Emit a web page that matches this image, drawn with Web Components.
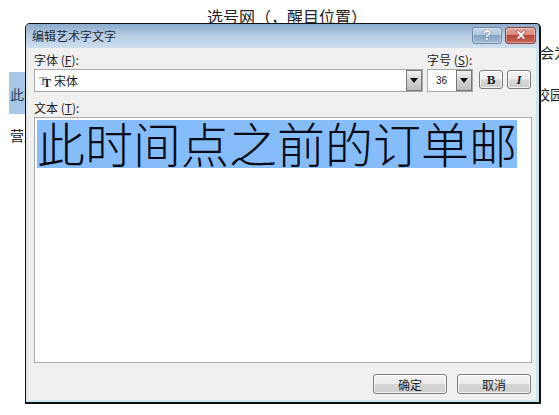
<!DOCTYPE html>
<html>
<head>
<meta charset="utf-8">
<style>
  html, body { margin: 0; background: #fff; }
  body { width: 559px; height: 415px; overflow: hidden; font-family: "Noto Sans CJK SC", sans-serif; }
</style>
</head>
<body>
<doc-page></doc-page>
<art-dialog></art-dialog>

<script>
class DocPage extends HTMLElement {
  constructor() {
    super();
    this.attachShadow({ mode: "open" });
    this.shadowRoot.innerHTML = `
      <style>
        :host { display: block; width: 559px; height: 415px; overflow: hidden; position: relative; color: #222; font-size: 14px; line-height: 20px; }
        .head { text-align: center; padding: 6px 0 0 15px; font-size: 16px; }
        .head span { display: inline-block; width: 16px; }
        .row { position: absolute; white-space: nowrap; }
        .hl { position: absolute; left: 9px; top: 72px; width: 17px; height: 42px; background: #a9c8e8; }
      </style>
      <div class="head">选号网<span>（</span><span>，</span>醒目位置<span>）</span></div>
      <div class="hl"></div>
      <div class="row" style="left:10px;top:84px;color:#1f3f63">此时</div>
      <div class="row" style="left:10px;top:125px">营业</div>
      <div class="row" style="left:540px;top:42px">会为</div>
      <div class="row" style="left:536px;top:84px">校园</div>
    `;
  }
}

class CaptionButton extends HTMLElement {
  constructor() {
    super();
    this.attachShadow({ mode: "open" });
  }
  connectedCallback() {
    const close = this.hasAttribute("close");
    this.shadowRoot.innerHTML = `
      <style>
        :host { display: flex; align-items: center; justify-content: center; height: 17px; box-sizing: border-box; width: ${close ? 31 : 30}px; border: 1px solid ${close ? "#8d4a45" : "#6f8ba8"}; border-radius: 3px;
          background: ${close ? "linear-gradient(#e2a79c 0,#d98a7c 45%,#b8453a 50%,#c9675a 100%)" : "linear-gradient(#c3d6e8 0,#afc6dc 45%,#86a5c4 50%,#a1bcd6 100%)"};
          box-shadow: inset 0 0 0 1px rgba(255,255,255,.35); }
        svg { display: block; }
        span { font: bold 14px "Liberation Sans", sans-serif; color: #f4f7fa; text-shadow: 0 0 1px #334; line-height: 15px; }
      </style>
      ${close
        ? `<svg width="14" height="10" viewBox="0 0 14 10"><path d="M2 1h3l2 2.2L9 1h3L8.6 5 12 9H9L7 6.8 5 9H2l3.4-4z" fill="#fff" stroke="#7a3a34" stroke-width=".5"/></svg>`
        : `<span>?</span>`}
    `;
  }
}

class ComboBox extends HTMLElement {
  constructor() {
    super();
    this.attachShadow({ mode: "open" });
    this.shadowRoot.innerHTML = `
      <style>
        :host { display: flex; box-sizing: border-box; height: 23px; border: 1px solid #a9a9a9; background: #fff; align-items: stretch; font-size: 12px; color: #222; }
        .val { flex: 1; min-width: 0; display: flex; align-items: center; line-height: 21px; }
        .arrow { width: 16px; flex: none; box-sizing: border-box; border: 1px solid #777; background: linear-gradient(#f2f2f2, #d4d4d4 50%, #bdbdbd); display: flex; align-items: center; justify-content: center; }
        .arrow i { width: 0; height: 0; border: 4px solid transparent; border-top: 5px solid #111; border-bottom: 0; }
      </style>
      <div class="val"><slot></slot></div>
      <div class="arrow"><i></i></div>
    `;
  }
}

class PushButton extends HTMLElement {
  constructor() {
    super();
    this.attachShadow({ mode: "open" });
    this.shadowRoot.innerHTML = `
      <style>
        :host { display: flex; box-sizing: border-box; align-items: center; justify-content: center; border: 1px solid #7b7b7b; border-radius: 3px;
          background: linear-gradient(#f4f4f4 0, #ececec 48%, #d6d6d6 52%, #cfcfcf 100%); box-shadow: inset 0 0 0 1px rgba(255,255,255,.7); color: #222; font-size: 12px; }
      </style>
      <slot></slot>
    `;
  }
}

class ArtDialog extends HTMLElement {
  constructor() {
    super();
    this.attachShadow({ mode: "open" });
    this.shadowRoot.innerHTML = `
      <style>
        :host { position: absolute; left: 25px; top: 23px; width: 516px; height: 381px; box-sizing: border-box; display: flex; flex-direction: column;
          border: 1px solid #111; border-right-width: 2px; border-bottom-width: 2px; border-radius: 5px 5px 0 0; overflow: hidden; background: #cde5ee; color: #222; font-size: 12px; }
        .title { height: 24px; flex: none; display: flex; align-items: center; justify-content: space-between; padding: 0 3px 2px 6px; box-sizing: border-box;
          background: linear-gradient(#8caac8, #b4cbe2 45%, #cfdfee); font-size: 12px; color: #1c2a38; }
        .caps { display: flex; gap: 3px; }
        .body { flex: 1; display: flex; flex-direction: column; margin: 0 3px 2px 0; padding-left: 6px; background: #f0f0f0; border-left: 2px solid #e2e6e8; box-sizing: border-box; }
        .top { display: grid; grid-template-columns: 389px 46px 26px 24px; column-gap: 4px; padding-top: 3px; }
        .lab { height: 18px; line-height: 18px; font-size: 12px; white-space: nowrap; }
        .lab u { text-decoration: underline; }
        .size-lab { grid-column: 2 / 5; }
        .tt { display: inline-flex; width: 15px; margin: 2px 0 0 4px; font: bold 12px/12px "Liberation Serif", serif; }
        .tt b { color: #999; }
        .tt b + b { color: #222; margin-left: -4px; margin-top: 2px; }
        .size { font: 10px "Liberation Sans", sans-serif; padding-left: 8px; }
        .fmt { width: 24px; height: 19px; margin-top: 1px; justify-self: end; font: bold 13px "Liberation Serif", serif; }
        .fmt.it { font-style: italic; }
        .text-lab { margin-top: 7px; }
        .edit { width: 498px; height: 246px; box-sizing: border-box; border: 1px solid #a9a9a9; background: #fff; padding: 2px 0 0 2px; flex: none; }
        .sel { display: block; width: 480px; height: 48px; background: #85bdfb; color: #0a0a14; font-size: 48px; line-height: 44px; white-space: nowrap; font-family: "Noto Sans CJK SC", sans-serif; font-weight: 300; }
        .foot { display: flex; justify-content: flex-end; gap: 10px; padding: 11px 5px 0 0; }
        .foot push-button { width: 74px; height: 20px; }
      </style>
      <div class="title">
        <span>编辑艺术字文字</span>
        <div class="caps"><caption-button></caption-button><caption-button close></caption-button></div>
      </div>
      <div class="body">
        <div class="top">
          <div class="lab">字体 (<u>F</u>):</div>
          <div class="lab size-lab">字号 (<u>S</u>):</div>
          <combo-box><span class="tt"><b>T</b><b>T</b></span>宋体</combo-box>
          <combo-box><span class="size">36</span></combo-box>
          <push-button class="fmt">B</push-button>
          <push-button class="fmt it">I</push-button>
        </div>
        <div class="lab text-lab">文本 (<u>T</u>):</div>
        <div class="edit"><span class="sel">此时间点之前的订单邮</span></div>
        <div class="foot">
          <push-button>确定</push-button>
          <push-button>取消</push-button>
        </div>
      </div>
    `;
  }
}

customElements.define("doc-page", DocPage);
customElements.define("caption-button", CaptionButton);
customElements.define("combo-box", ComboBox);
customElements.define("push-button", PushButton);
customElements.define("art-dialog", ArtDialog);
</script>
</body>
</html>
